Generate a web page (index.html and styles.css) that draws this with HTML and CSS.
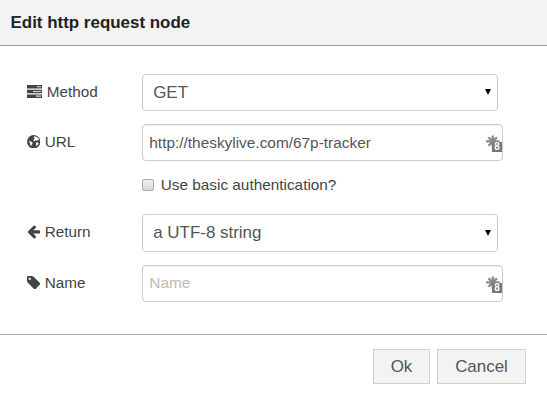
FILE: index.html
```html
<!DOCTYPE html>
<html lang="en">
<head>
<meta charset="utf-8">
<title>Edit http request node</title>
<link rel="stylesheet" href="styles.css">
</head>
<body>
<header class="title">Edit http request node</header>
<main class="form">
  <div class="row method">
    <div class="label"><svg class="icon wide" viewBox="0 0 15 13"><path d="M0 0H15V3.5H0ZM0 4.7H15V8.2H0ZM0 9.4H15V12.9H0Z"/><path d="M10 1.2H14V2.3H10ZM6 5.9H14V7H6ZM9 10.6H14V11.7H9Z" fill="#ddd"/></svg>Method</div>
    <div class="field select"><span>GET</span><i class="caret"></i></div>
  </div>
  <div class="row url">
    <div class="label"><svg class="icon" viewBox="0 0 14 14"><circle cx="7" cy="7" r="7"/><path class="land" d="M7.7 1.3L10.2 2 11.8 3.3 12.8 5.4 11.3 5.1 10.2 6 8.8 5.5 8 6.5 6.6 5.8 7.2 4.4 8.5 3.8 7 2.8ZM2 5.8L3.2 6.6 4.6 7 6 8.2 5.5 9.5 4.8 10.4 4.6 11.6 3.6 10.6 3.2 9ZM9.3 8L11 7.6 12.2 8.6 11 10.8 9.5 11.8 9.6 9.8Z"/></svg>URL</div>
    <div class="field input"><span>http://theskylive.com/67p-tracker</span><div class="key"><svg viewBox="0 0 14 13"><path d="M6.8 0.5V12.5M2.5 2.2L11 10.7M11 2.2L2.5 10.7M0 6.4H13.5"/></svg><span class="count">8</span></div></div>
  </div>
  <div class="auth"><i class="checkbox"></i><span>Use basic authentication?</span></div>
  <div class="row return">
    <div class="label"><svg class="icon" viewBox="0 128 1536 1600"><path d="M1536 896v128q0 53-32.5 90.5t-84.5 37.5h-704l293 294q38 36 38 90t-38 90l-75 76q-37 37-90 37-52 0-91-37l-651-652q-37-37-37-90 0-52 37-91l651-650q38-38 91-38 52 0 90 38l75 74q38 38 38 91t-38 91l-293 293h704q52 0 84.5 37.5t32.5 90.5z"/></svg>Return</div>
    <div class="field select"><span>a UTF-8 string</span><i class="caret"></i></div>
  </div>
  <div class="row name">
    <div class="label"><svg class="icon" viewBox="0 128 1536 1536"><path d="M448 448q0-53-37.5-90.5t-90.5-37.5-90.5 37.5-37.5 90.5 37.5 90.5 90.5 37.5 90.5-37.5 37.5-90.5zm1067 576q0 53-37 90l-491 492q-39 37-91 37-53 0-90-37l-715-716q-38-37-64.5-101t-26.5-117v-416q0-52 38-90t90-38h416q53 0 117 26.5t102 64.5l715 714q37 39 37 91z"/></svg>Name</div>
    <div class="field input"><span class="placeholder">Name</span><div class="key"><svg viewBox="0 0 14 13"><path d="M6.8 0.5V12.5M2.5 2.2L11 10.7M11 2.2L2.5 10.7M0 6.4H13.5"/></svg><span class="count">8</span></div></div>
  </div>
</main>
<footer class="actions"><button>Ok</button><button class="cancel">Cancel</button></footer>
</body>
</html>
```

FILE: styles.css
```css
* { box-sizing: border-box; }
body {
  margin: 0;
  height: 400px;
  overflow: hidden;
  background: #fff;
  color: #444;
  font: 15.3px/20px "Liberation Sans", Arial, sans-serif;
}
.title {
  height: 46px;
  padding: 13px 10.5px 0;
  background: #f3f3f3;
  border-bottom: 1px solid #999;
  color: #222;
  font-size: 16.95px;
  font-weight: bold;
}
.form { height: 288px; padding: 28px 0 0 27px; }
.row { display: flex; align-items: center; height: 37px; }
.label { display: flex; align-items: center; width: 115px; padding-bottom: 2px; }
.icon { width: 13.4px; height: 13.4px; margin-right: 4.3px; fill: #444; }
.icon.wide { width: 15px; height: 13px; margin-right: 4.8px; }
.land { fill: #fff; }
.field {
  display: flex;
  align-items: center;
  justify-content: space-between;
  height: 100%;
  border: 1px solid #ccc;
  border-radius: 4px;
  color: #555;
}
.select { width: 356px; padding: 0 6px 0 10.2px; font-size: 16.95px; }
.input { width: 361px; padding: 0 0 0 6.3px; font-size: 15.4px; box-shadow: inset 0 1px 1px rgba(0, 0, 0, .075); }
.caret { border: solid transparent; border-width: 6px 3.5px 0; border-top-color: #000; margin-bottom: 1px; }
.key { position: relative; width: 16px; height: 17px; margin-top: 2px; }
.key svg { display: block; width: 14px; height: 13px; fill: none; stroke: #8a8a8a; stroke-width: 2.3; }
.count {
  position: absolute;
  right: 0;
  bottom: 0;
  width: 10px;
  height: 10px;
  background: #777;
  color: #fff;
  font-size: 10px;
  font-weight: bold;
  line-height: 10px;
  text-align: center;
}
.placeholder { color: #bbb; margin-bottom: 2px; }
.url { margin-top: 13px; }
.auth { display: flex; align-items: center; height: 20px; margin: 14px 0 19px 115px; }
.checkbox {
  width: 12px;
  height: 12px;
  margin-right: 6.7px;
  border: 1px solid #aaa;
  border-radius: 2px;
  background: linear-gradient(#eee, #d9d9d9);
}
.auth span { font-size: 15.35px; }
.return { height: 38px; }
.name { margin-top: 13px; }
.actions {
  display: flex;
  justify-content: flex-end;
  gap: 7px;
  height: 66px;
  padding: 14px 21px 0 0;
  border-top: 1px solid #aaa;
}
button {
  width: 57px;
  height: 35px;
  padding: 0;
  border: 1px solid #d0d0d0;
  background: #f3f3f3;
  color: #555;
  font: 16.95px/20px "Liberation Sans", Arial, sans-serif;
}
.cancel { width: 89px; }
```
